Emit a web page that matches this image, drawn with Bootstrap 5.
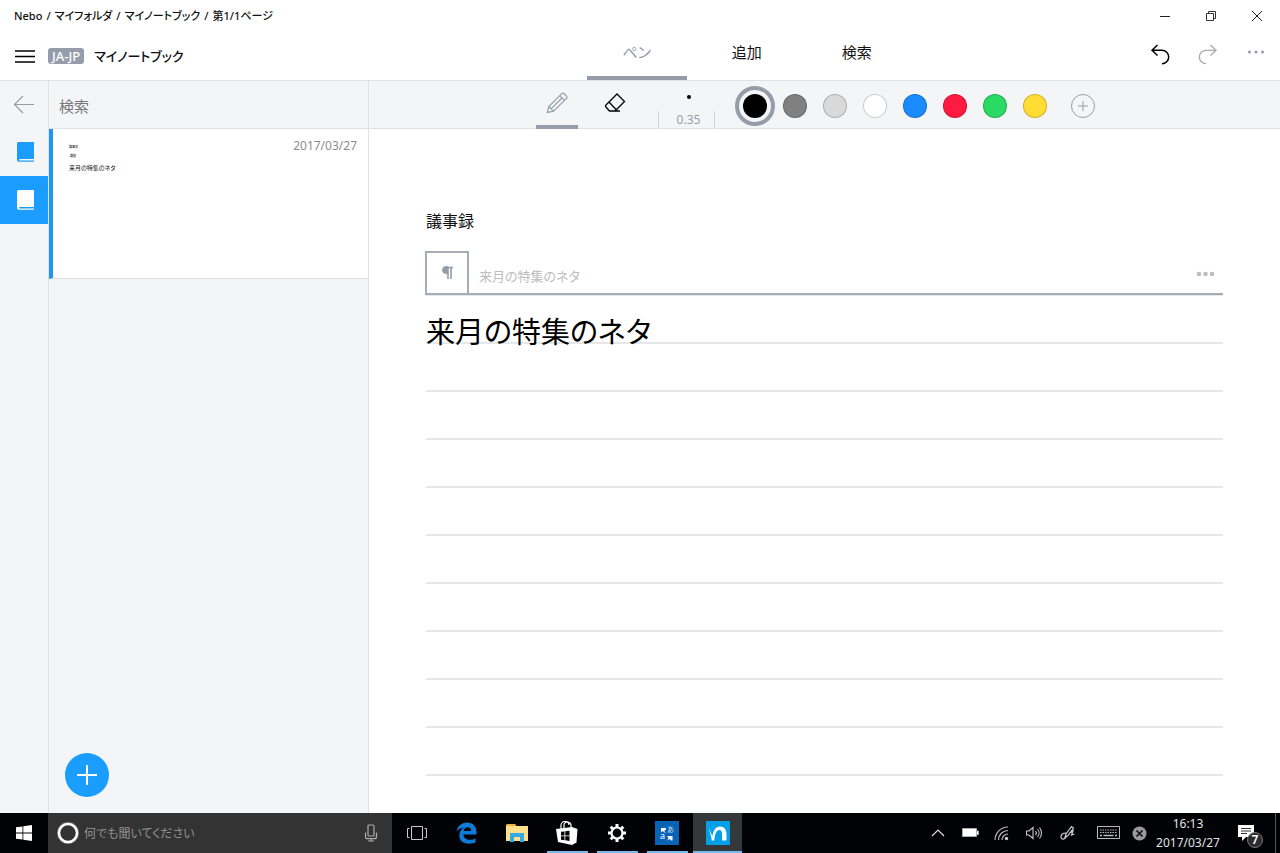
<!DOCTYPE html>
<html lang="ja">
<head>
<meta charset="utf-8">
<meta name="viewport" content="width=device-width, initial-scale=1">
<title>Nebo</title>
<link href="https://cdn.jsdelivr.net/npm/bootstrap@5.3.0/dist/css/bootstrap.min.css" rel="stylesheet">
<style>
:root { --slate:#959daa; --pane:#f4f5f7; --rule:#dfe1e4; --accent:#1b9dff; }
body { font-family:"Noto Sans","Noto Sans CJK JP",sans-serif; font-feature-settings:"palt"; color:#111; font-size:16px; line-height:24px; }
button, input { font-feature-settings:inherit; }
button { border:0; background:none; padding:0; color:inherit; }
svg { display:block; flex:none; }
a { color:inherit; text-decoration:none; }
.titlebar { height:32px; }
.crumbs { font-size:11px; font-weight:500; line-height:32px; padding-left:14px; --bs-breadcrumb-item-padding-x:4px; --bs-breadcrumb-divider-color:#111; --bs-breadcrumb-item-active-color:#111; }
.win-btn { width:46px; height:32px; }
.menubar { display:grid; grid-template-columns:11fr 6fr 7fr; height:48px; }
.brand { gap:10px; padding-left:15px; }
.lang-tag { background:var(--slate); color:#fff; font-size:13px; line-height:16px; padding:0 4px; border-radius:3px; font-weight:500; margin-left:3px; }
.doc-title { font-size:13px; font-weight:500; line-height:24px; }
.tab-btn { width:100px; height:48px; font-size:15px; border-bottom:4px solid transparent; padding-bottom:4px; }
.tab-btn.active { color:var(--slate); border-color:var(--slate); }
.cmd { width:48px; height:44px; }
.line-t { border-top:1px solid var(--rule); }
.line-b { border-bottom:1px solid var(--rule); }
.rail { width:49px; border-right:1px solid var(--rule); background:var(--pane); }
.rail button { width:48px; height:48px; color:var(--accent); }
.rail .back { height:47px; }
.rail button.active { background:var(--accent); color:#fff; }
.rail .book { padding-left:2px; }
.pages { width:320px; border-right:1px solid var(--rule); background:var(--pane); }
.bar { height:48px; background:var(--pane); box-shadow:inset 0 -1px var(--rule); }
.toolbar { padding-right:18px; }
.find { width:100%; border:0; background:none; outline:0; padding:2px 10px 0; font-size:15px; color:#555; }
.find::placeholder { color:#767676; opacity:1; }
.page-item { height:150px; border-left:4px solid #2296ee; background:#fff; padding:9px 11px 0 16px; }
.page-date { font-size:12px; line-height:16px; color:#8d8d8d; }
.thumb { padding-top:7px; }
.thumb-s { font-size:3px; line-height:5px; margin-bottom:4px; }
.thumb-l { font-size:6px; line-height:8px; margin-top:5px; }
.add-page { left:16px; bottom:16px; width:44px; height:44px; border-radius:50%; background:var(--accent); }
.tool { width:42px; height:48px; border-bottom:4px solid transparent; }
.tool.active { border-color:var(--slate); }
.stroke-size { width:57px; height:48px; margin:0 26px 0 22px; padding-left:4px; font-size:12px; line-height:16px; color:var(--slate); background:linear-gradient(#d3d6da,#d3d6da) left bottom/1px 18px no-repeat, linear-gradient(#d3d6da,#d3d6da) right bottom/1px 18px no-repeat; }
.dot { width:4px; height:4px; border-radius:50%; background:#000; margin:13px auto; }
.swatches { gap:16px; padding:2px 0 0 2px; }
.swatch { width:24px; height:24px; border-radius:50%; border:1px solid rgba(0,0,0,.2); }
.swatch.active { outline:4px solid var(--slate); outline-offset:4px; border:0; }
.sw-black { background:#000; } .sw-grey { background:#808080; } .sw-light { background:#d9d9d9; } .sw-white { background:#fff; }
.sw-blue { background:#1a8cff; } .sw-red { background:#ff1a40; } .sw-green { background:#2bd965; } .sw-yellow { background:#ffdd33; }
.sheet { padding:80px 57px 0 57px; }
.sheet h1 { font-size:16px; font-weight:400; line-height:24px; margin:0 0 18px; }
.para-head { height:44px; border-bottom:2px solid #a7adb7; margin-left:-1px; }
.pilcrow { width:44px; height:44px; border:2px solid #a7adb7; color:var(--slate); }
.para-name { flex:1; min-width:0; border:0; outline:0; background:none; padding:8px 10px 0; font-size:13px; color:#bdbdbd; }
.para-menu { padding:4px 8px 0 0; }
.ruled { min-height:482px; background:linear-gradient(#e6e7e9 0 2px,transparent 2px) 0 47px/100% 48px repeat; }
.ink { font-size:29px; line-height:48px; padding-top:13px; font-weight:400; margin:0; color:#000; }
.taskbar { height:40px; background:#000206; color:#fff; }
.start { width:48px; }
.ask { width:344px; background:#333; padding:0 13px 0 8px; }
.ask input { flex:1; min-width:0; background:none; border:0; outline:0; font-size:12px; padding:2px 0 0 4px; color:#ddd; }
.ask input::placeholder { color:#929292; opacity:1; }
.task { width:50px; height:40px; display:flex; align-items:center; justify-content:center; position:relative; }
.task.open::after { content:""; position:absolute; left:5px; right:4px; bottom:0; height:2px; background:#76b9ed; }
.task.active { background:#35383b; width:49px; margin-left:1px; }
.task.active::after { left:0; right:0; }
.tray { gap:12px; color:#e4e4e4; padding-right:4px; }
.clock { font-size:12px; line-height:19px; width:66px; margin:0 4px 0 -4px; }
.notes { width:26px; height:26px; }
.count { position:absolute; left:10px; top:12px; width:16px; height:16px; border-radius:50%; background:#2c2c2c; border:1px solid #777; font-size:12px; line-height:14px; font-weight:600; color:#fff; text-align:center; }
.peek { width:1px; height:40px; background:#555; }
</style>
</head>
<body class="vh-100 d-flex flex-column bg-white overflow-hidden">

<header>
  <div class="titlebar d-flex justify-content-between">
    <nav aria-label="breadcrumb">
      <ol class="breadcrumb crumbs mb-0">
        <li class="breadcrumb-item"><a href="#">Nebo</a></li>
        <li class="breadcrumb-item"><a href="#">マイフォルダ</a></li>
        <li class="breadcrumb-item"><a href="#">マイノートブック</a></li>
        <li class="breadcrumb-item active" aria-current="page">第1/1ページ</li>
      </ol>
    </nav>
    <div class="d-flex">
      <button class="win-btn d-flex align-items-center justify-content-center" aria-label="最小化"><svg width="12" height="12"><path d="M1 6.500h10" stroke="#222"/></svg></button>
      <button class="win-btn d-flex align-items-center justify-content-center" aria-label="元に戻す"><svg width="12" height="12" fill="none" stroke="#333"><path d="M1.500 3.500h7v7h-7zM3.500 3.500v-2h7v7h-2"/></svg></button>
      <button class="win-btn d-flex align-items-center justify-content-center" aria-label="閉じる"><svg width="12" height="12"><path d="M1 1l10 10M11 1L1 11" stroke="#222"/></svg></button>
    </div>
  </div>
  <div class="menubar">
    <div class="brand d-flex align-items-center">
      <button aria-label="メニュー"><svg width="20" height="14" stroke="#000" stroke-width="1.600"><path d="M-1 2h22M-1 7.500h22M-1 13h22"/></svg></button>
      <span class="lang-tag">JA-JP</span>
      <span class="doc-title">マイノートブック</span>
    </div>
    <div class="d-flex justify-content-between">
      <button class="tab-btn active">ペン</button>
      <button class="tab-btn">追加</button>
      <button class="tab-btn">検索</button>
    </div>
    <div class="d-flex justify-content-end">
      <button class="cmd d-flex align-items-center justify-content-center" aria-label="元に戻す"><svg width="20" height="22" fill="none" stroke="#000" stroke-width="1.500"><path d="M7.500 2L2 7.300l5.500 5.200M2 7.300h10a6.600 6.600 0 0 1 0 13.400"/></svg></button>
      <button class="cmd d-flex align-items-center justify-content-center" aria-label="やり直し"><svg width="20" height="22" fill="none" stroke="#aaa" stroke-width="1.300"><path d="M12.500 2L18 7.300l-5.500 5.200M18 7.300H8a6.600 6.600 0 0 0 0 13.400"/></svg></button>
      <button class="cmd d-flex align-items-center justify-content-center" aria-label="その他"><svg width="18" height="8" fill="#959daa"><circle cx="2.500" cy="2" r="1.500"/><circle cx="9" cy="2" r="1.500"/><circle cx="15.500" cy="2" r="1.500"/></svg></button>
    </div>
  </div>
</header>

<div class="flex-fill d-flex line-t" style="min-height:0">
  <nav class="rail flex-shrink-0 d-flex flex-column" aria-label="ノートブック">
    <button class="back d-flex align-items-center justify-content-center" aria-label="戻る"><svg width="22" height="20" fill="none" stroke="#959daa" stroke-width="1.200"><path d="M10 1L1.500 9.500 10 18M1.500 9.500H21"/></svg></button>
    <button class="book d-flex align-items-center justify-content-center" aria-label="ノートブック 1"><svg width="18" height="22" fill="currentColor"><path d="M2.500 1H18v17H3.200v1.500H18v1.200H2.500A2 2 0 0 1 1 19V2.500A1.500 1.500 0 0 1 2.500 1z"/></svg></button>
    <button class="book active d-flex align-items-center justify-content-center" aria-label="ノートブック 2"><svg width="18" height="22" fill="currentColor"><path d="M2.500 1H18v17H3.200v1.500H18v1.200H2.500A2 2 0 0 1 1 19V2.500A1.500 1.500 0 0 1 2.500 1z"/></svg></button>
  </nav>

  <aside class="pages flex-shrink-0 position-relative">
    <div class="bar d-flex align-items-center"><input class="find" type="search" placeholder="検索" aria-label="検索"></div>
    <a href="#" class="page-item line-b d-flex justify-content-between">
      <div class="thumb">
        <div class="thumb-s">議事録</div>
        <div class="thumb-s">-議題</div>
        <div class="thumb-l">来月の特集のネタ</div>
      </div>
      <span class="page-date">2017/03/27</span>
    </a>
    <button class="add-page position-absolute d-flex align-items-center justify-content-center" aria-label="ページを追加"><svg width="20" height="20"><path d="M10 0v20M0 10h20" stroke="#fff" stroke-width="2"/></svg></button>
  </aside>

  <main class="flex-fill d-flex flex-column" style="min-width:0">
    <div class="bar toolbar d-flex align-items-center justify-content-center">
      <button class="tool active d-flex align-items-center justify-content-center" aria-label="ペン"><svg width="22" height="22" fill="none" stroke="#959daa" stroke-width="1.200"><path d="M1.500 20.500l1.300-6L15.500 1.800a2 2 0 0 1 2.800 0l2 2a2 2 0 0 1 0 2.800L7.500 19.200zM2.800 14.500l2.400 2.400 2.300 2.300M5.300 16.700L16.500 5.500M13.700 3.600l4.800 4.800"/></svg></button>
      <button class="tool ms-3 d-flex align-items-center justify-content-center" aria-label="消しゴム"><svg width="22" height="22" fill="none" stroke="#000" stroke-width="1.300"><path d="M1.500 13.500L13 2l7.500 7.500-9.500 9.500H5.500L1.500 14.500zM5 10l7 7.500M5 19h11"/></svg></button>
      <button class="stroke-size d-block" aria-label="線の太さ"><div class="dot"></div>0.35</button>
      <div class="swatches d-flex align-items-center">
        <button class="swatch sw-black active" aria-label="黒"></button>
        <button class="swatch sw-grey" aria-label="灰色"></button>
        <button class="swatch sw-light" aria-label="薄い灰色"></button>
        <button class="swatch sw-white" aria-label="白"></button>
        <button class="swatch sw-blue" aria-label="青"></button>
        <button class="swatch sw-red" aria-label="赤"></button>
        <button class="swatch sw-green" aria-label="緑"></button>
        <button class="swatch sw-yellow" aria-label="黄"></button>
        <button class="ms-2" aria-label="色を追加"><svg width="24" height="24" fill="none" stroke="#959daa"><circle cx="12" cy="12" r="11.500"/><path d="M12 7v10M7 12h10"/></svg></button>
      </div>
    </div>
    <article class="sheet flex-fill">
      <h1>議事録</h1>
      <div class="para-head d-flex">
        <button class="pilcrow d-flex align-items-center justify-content-center" aria-label="段落"><svg width="12" height="14" fill="none" stroke="currentColor"><path d="M5 7.500A3.500 3.500 0 0 1 5 .500h1.500v7z" fill="currentColor"/><path d="M4 1.500h8M7 1v12M10 1v12" stroke-width="1.600"/></svg></button>
        <input class="para-name" type="text" value="来月の特集のネタ" aria-label="段落の名前">
        <button class="para-menu" aria-label="段落のメニュー"><svg width="19" height="6" fill="#bdbdbd"><circle cx="3" cy="3" r="2.300"/><circle cx="9.500" cy="3" r="2.300"/><circle cx="16" cy="3" r="2.300"/></svg></button>
      </div>
      <div class="ruled"><p class="ink">来月の特集のネタ</p></div>
    </article>
  </main>
</div>

<footer class="taskbar d-flex flex-shrink-0">
  <button class="start d-flex align-items-center justify-content-center" aria-label="スタート"><svg width="16" height="16" fill="#fff"><path d="M0 2.300l6.500-.9v6.200H0zM7.300 1.300L16 0v7.600H7.300zM0 8.400h6.500v6.200L0 13.700zM7.300 8.400H16V16l-8.700-1.300z"/></svg></button>
  <div class="ask d-flex align-items-center">
    <svg width="24" height="24" fill="none"><circle cx="12" cy="12" r="10" stroke="#777" stroke-width="2"/><circle cx="12" cy="12" r="9" stroke="#fff" stroke-width="2.500"/></svg>
    <input type="text" placeholder="何でも聞いてください" aria-label="Cortana">
    <button aria-label="音声入力"><svg width="16" height="18" fill="none" stroke="#aaa" stroke-width="1.200"><rect x="5" y="1" width="6" height="11" rx="1"/><path d="M2.500 8.500v4.200a2 2 0 0 0 2 2h7a2 2 0 0 0 2-2V8.500M8 14.700V17M5 17h6"/></svg></button>
  </div>
  <button class="task" aria-label="タスク ビュー"><svg width="22" height="16" fill="none" stroke="#ccc"><path d="M5.500 1.500h11v13h-11zM3.500 3.500h-2v9h2M18.500 3.500h2v9h-2"/></svg></button>
  <button class="task" aria-label="Edge"><svg width="22" height="22" viewBox="0 0 22 22" fill="#0d7bd8"><path d="M.5 9.500C1.500 4 5.500.5 11 .5c6 0 9.500 4 9.500 9.700v2.300H7.500c.2 3.800 3 5.300 6.300 5.300 2.200 0 4-.5 5.700-1.500v4c-2 1-4.200 1.400-6.500 1.400C7 21.700 3.300 18.500 3.300 13.500c0-3.800 2-6.700 5.200-8C5 5.700 2.200 7.200.5 9.500zM7.700 8.900h7.500c0-2.300-1.200-3.700-3.600-3.700-2.200 0-3.600 1.500-3.900 3.700z"/></svg></button>
  <button class="task" aria-label="エクスプローラー"><svg width="22" height="20"><path d="M0 2.500L1 1h8l1 2h12v15H0z" fill="#ffe08a"/><path d="M1 1h8l1 2H1z" fill="#e8b73a"/><path d="M4 10h14v9h-4v-5H8v5H4z" fill="#35a9e1"/></svg></button>
  <button class="task open" aria-label="ストア"><svg width="22" height="24"><path d="M5 8V5a4 4 0 0 1 8-1M8 7V4.500a3.500 3.500 0 0 1 7 0V7" fill="none" stroke="#fff" stroke-width="1.200"/><path d="M0 8l16-2v18L2 21zM16 6l5.500 2-1 13.500L16 24z" fill="#fff"/><path d="M5 10.800l3.500-.4v4H5zM9.300 10.300l4.200-.5v4.600H9.300zM5 15.200h3.500v4L5 18.700zM9.300 15.200h4.200V20l-4.200-.7z" fill="#000206"/></svg></button>
  <button class="task open" aria-label="設定"><svg width="20" height="20" viewBox="-10 -10 20 20" fill="none" stroke="#fff"><circle r="5.500" stroke-width="2.200"/><path d="M0-6v-3M0 6v3M-6 0h-3M6 0h3M4.300-4.300l2-2M-4.300-4.300l-2-2M4.300 4.300l2 2M-4.300 4.300l-2 2" stroke-width="3"/></svg></button>
  <button class="task open" aria-label="辞書"><svg width="24" height="24"><path d="M0 0h24v24H0z" fill="#0963b5"/><path d="M6 7h5v1.500L9 10l2 1.500H9.500L7.500 10 6 11.500zM12 15h5.500v4.500H16L14.500 18 12 19.500l1.500-2.500z" fill="#fff"/><text x="12" y="11" font-size="7" fill="#cfe0f2">あ</text><text x="5" y="18" font-size="9" fill="#fff">a</text></svg></button>
  <button class="task open active" aria-label="Nebo"><svg width="24" height="24"><path d="M0 0h24v24H0z" fill="#03a0e8"/><path d="M2.500 6c1.800 4 2.800 6.500 3.800 9.500C7.300 9.500 9.500 5.500 14 5.500c4.500 0 6.500 3 6.500 8V19.500H16v-6c0-3-.6-4.500-2.500-4.500C10.500 9 8.800 13 8.300 19.500H5.800C5 15 4 11 2.500 6z" fill="#fff"/></svg></button>
  <div class="tray ms-auto d-flex align-items-center">
    <svg width="14" height="8" fill="none" stroke="#ddd" stroke-width="1.200"><path d="M1 7l6-6 6 6"/></svg>
    <svg width="20" height="12" class="ms-1"><path d="M1.500 1.500h14v8h-14zM16 4h1.500v3.500H16" fill="#fff" stroke="#aaa"/></svg>
    <svg width="16" height="16" class="me-1" fill="none" stroke="#bbb" stroke-width="1.200"><path d="M2 15A13 13 0 0 1 15 2M5.500 15A9.500 9.500 0 0 1 15 5.500M9 15a6 6 0 0 1 6-6"/><circle cx="13.500" cy="13.500" r="1.200" fill="#fff"/></svg>
    <svg width="18" height="14" fill="none" stroke="#ccc" stroke-width="1.100"><path d="M1.500 5h2.500l4-3.500v11L4 9H1.500zM10.500 5a3 3 0 0 1 0 4M12.500 3a6 6 0 0 1 0 8M14.500 1.500a8.500 8.500 0 0 1 0 11"/></svg>
    <svg width="18" height="16" class="ms-1" fill="none" stroke="#ccc" stroke-width="1.200"><path d="M6 12.500L7 9l5.500-7.500 2 1.500L9 10.500zM7 8C3.500 8 1.500 10 2 12.500c.8 2.500 4 2 5.500-1M10 8.500l4-2.500-1.500 4 3-1"/></svg>
    <svg width="23" height="14" class="ms-2" fill="none" stroke="#bbb"><path d="M.500.500h22v12H.500z"/><path d="M3 4h17M3 6.500h17" stroke-dasharray="1.500 1"/><path d="M3 9.500h2M6.500 9.500h10M18 9.500h2" stroke-width="1.500"/></svg>
    <svg width="15" height="15"><circle cx="7.500" cy="7.500" r="7" fill="#999"/><path d="M4.500 4.500l6 6M10.500 4.500l-6 6" stroke="#111" stroke-width="1.700"/></svg>
    <div class="clock text-center">16:13<br>2017/03/27</div>
    <button class="notes position-relative" aria-label="通知"><svg width="26" height="26"><path d="M1 5h16v12H9l-4 4v-4H1z" fill="#fff"/><path d="M4 8.500h10M4 11h10M4 13.500h6" stroke="#333"/></svg><span class="count">7</span></button>
    <div class="peek"></div>
  </div>
</footer>

<script src="https://cdn.jsdelivr.net/npm/bootstrap@5.3.0/dist/js/bootstrap.bundle.min.js"></script>
</body>
</html>
